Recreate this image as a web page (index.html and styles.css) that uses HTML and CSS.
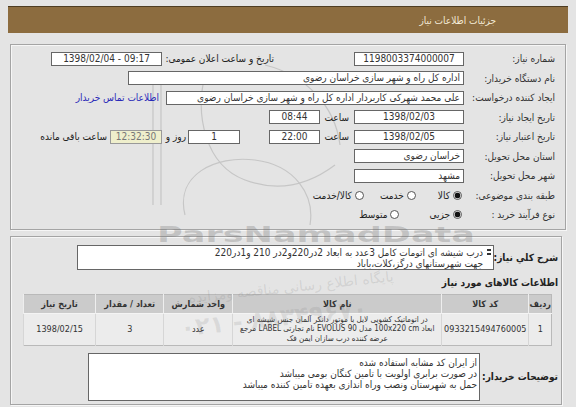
FILE: index.html
```html
<!DOCTYPE html>
<html dir="rtl" lang="fa">
<head>
<meta charset="utf-8">
<link rel="stylesheet" href="styles.css">
</head>
<body>
<div class="page">
  <div class="titlebar"><span class="title">جزئیات اطلاعات نیاز</span></div>

  <div class="panel p1">
    <div class="row">
      <div class="lbl">شماره نیاز:</div>
      <div class="box w110 num">1198003374000007</div>
      <div class="lbl-pub">تاریخ و ساعت اعلان عمومی:</div>
      <div class="box pub num">1398/02/04 - 09:17</div>
    </div>
    <div class="row">
      <div class="lbl">نام دستگاه خریدار:</div>
      <div class="box w336">اداره کل راه و شهر سازی خراسان رضوی</div>
    </div>
    <div class="row">
      <div class="lbl">ایجاد کننده درخواست:</div>
      <div class="box w298">علی محمد شهرکی کاربردار اداره کل راه و شهر سازی خراسان رضوی</div>
      <div class="link">اطلاعات تماس خریدار</div>
    </div>
    <div class="row">
      <div class="lbl">تاریخ ایجاد نیاز:</div>
      <div class="box w110 num">1398/02/03</div>
      <div class="hour">ساعت</div>
      <div class="box time num">08:44</div>
    </div>
    <div class="row">
      <div class="lbl">تاریخ اعتبار نیاز:</div>
      <div class="box w110 num">1398/02/05</div>
      <div class="hour">ساعت</div>
      <div class="box time num">22:00</div>
      <div class="box days num">1</div>
      <div class="dayslbl">روز و</div>
      <div class="box remain num">12:32:30</div>
      <div class="remainlbl">ساعت باقی مانده</div>
    </div>
    <div class="row">
      <div class="lbl">استان محل تحویل:</div>
      <div class="box w110">خراسان رضوی</div>
    </div>
    <div class="row">
      <div class="lbl">شهر محل تحویل:</div>
      <div class="box w110">مشهد</div>
    </div>
    <div class="row">
      <div class="lbl">طبقه بندی موضوعی:</div>
      <span class="radio on r1"></span><span class="opt">کالا</span>
      <span class="radio r2"></span><span class="opt">خدمت</span>
      <span class="radio r3"></span><span class="opt">کالا/خدمت</span>
    </div>
    <div class="row">
      <div class="lbl">نوع فرآیند خرید :</div>
      <span class="radio on r1"></span><span class="opt">جزیی</span>
      <span class="radio r4"></span><span class="opt">متوسط</span>
    </div>
  </div>

  <div class="panel p2">
    <div class="desc-row">
      <div class="blbl b-desc">شرح کلي نياز:</div>
      <div class="desc">
        <span class="spin"></span>
        <div>درب شیشه ای اتومات کامل 3عدد به ابعاد 2در220و2در 210 و1در220</div>
        <div>جهت شهرستانهای درگز،کلات،باباد</div>
      </div>
    </div>
    <div class="sect">اطلاعات کالاهای مورد نیاز</div>
    <table class="items">
      <thead>
        <tr>
          <th class="c-row">ردیف</th>
          <th class="c-code">کد کالا</th>
          <th class="c-name">نام کالا</th>
          <th class="c-unit">واحد شمارش</th>
          <th class="c-qty">تعداد / مقدار</th>
          <th class="c-date">تاریخ نیاز</th>
        </tr>
      </thead>
      <tbody>
        <tr>
          <td>1</td>
          <td>0933215494760005</td>
          <td class="name">در اتوماتیک کشویی لایل با موتور دانکر آلمان جنس شیشه ای<br>ابعاد 100x220 cm مدل EVOLUS 90 نام تجارتی LABEL مرجع<br>عرضه کننده درب سازان ایمن فک</td>
          <td>عدد</td>
          <td>3</td>
          <td>1398/02/15</td>
        </tr>
      </tbody>
    </table>
    <div class="notes-row">
      <div class="blbl b-notes">توضیحات خریدار:</div>
      <div class="notes">
        <div>از ایران کد مشابه استفاده شده</div>
        <div>در صورت برابری اولویت با تامین کنگان بومی میباشد</div>
        <div>حمل به شهرستان ونصب وراه اندازی بعهده تامین کننده میباشد</div>
      </div>
    </div>
  </div>

  <svg class="wm-logo" width="200" height="180" viewBox="0 0 200 180">
    <g fill="none" stroke="#c6c6c6" stroke-width="1.2">
      <path d="M8 20 V150 M16 20 V150"/>
      <path d="M40 160 C30 120 70 100 110 105 C150 110 170 140 165 170"/>
      <path d="M60 20 C50 60 60 110 100 125 C140 140 170 125 190 110"/>
      <path d="M120 10 C160 20 190 50 195 90"/>
    </g>
  </svg>
  <svg class="wm-text" width="430" height="150" viewBox="0 0 430 150">
    <text x="17" y="42" textLength="318" lengthAdjust="spacingAndGlyphs" class="wm-brand">ParsNamadData</text>
    <text x="151" y="92" class="wm-fa" transform="rotate(-6 151 88)">پایگاه اطلاع رسانی مناقصه ومزایده</text>
    <text x="40" y="130" class="wm-tel" transform="rotate(-6 100 120)">۰۲۱ - ۸۸۳۴۹۶۷۰</text>
  </svg>
</div>
</body>
</html>
```

FILE: styles.css
```css
* { box-sizing: border-box; }
html, body { margin: 0; padding: 0; }
body {
  background: #e4e4e4;
  font-family: "DejaVu Sans Condensed", "DejaVu Sans", sans-serif;
  font-size: 10px;
  color: #222;
  width: 576px;
  height: 407px;
  overflow: hidden;
}
.page {
  position: relative;
  padding: 6px 8px 0 8px;
}
.titlebar {
  height: 27px;
  background: #8c6c3f;
  border-top: 1px solid #4d3c22;
  display: flex;
  align-items: center;
  padding-right: 72px;
}
.title { color: #f3ead6; font-size: 10px; }

.panel {
  border: 1px solid #a4a4a4;
  box-shadow: inset 1px 1px 0 #f6f6f6, 1px 1px 0 #f6f6f6;
  position: relative;
  z-index: 1;
}
.p1 {
  margin: 11px 2px 0 2px;
  padding: 4px 10px 4px 0;
}
.row {
  display: flex;
  align-items: center;
  height: 19.5px;
  line-height: 11px;
  white-space: nowrap;
}
.lbl { width: 88px; flex: none; color: #333; }
.box {
  height: 14px;
  line-height: 12px;
  border: 1px solid #666;
  background: #fff;
  padding: 0 3px;
  flex: none;
  overflow: hidden;
  white-space: nowrap;
  color: #333;
}
.num { direction: ltr; text-align: center; }
.w110 { width: 110px; margin-right: 3px; }
.w336 { width: 336px; margin-right: 3px; }
.w298 { width: 298px; margin-right: 3px; }
.lbl-pub { width: 107px; margin-right: 80px; flex: none; }
.pub { width: 111px; margin-right: 5px; }
.link { margin-right: 7px; color: #2a2ab8; }
.hour { width: 24px; margin-right: 5px; flex: none; }
.time { width: 51px; margin-right: 5px; }
.days { width: 52px; margin-right: 29px; }
.dayslbl { width: 19px; margin-right: 2px; flex: none; }
.remain { width: 52px; margin-right: 5px; background: #efefcc; color: #777; border-color: #999; }
.remainlbl { margin-right: 3px; }

.radio {
  width: 9px;
  height: 9px;
  border-radius: 50%;
  border: 1px solid #555;
  background: #fff;
  flex: none;
}
.radio.on { background: radial-gradient(circle, #111 0 2.6px, #fff 3.2px); }
.r1 { margin-right: 5px; }
.opt { margin-right: 3px; }
.r2 { margin-right: 22px; }
.r3 { margin-right: 16px; }
.r4 { margin-right: 30px; }

.p2 {
  margin: 6px 6px 0 2px;
  padding: 8px 3px 8px 10px;
  height: 169px;
}
.desc-row { display: flex; align-items: center; }
.blbl { font-weight: bold; font-size: 10px; flex: none; white-space: nowrap; }
.b-desc { width: 64px; }
.b-notes { width: 68px; }
.desc {
  position: relative;
  width: 417px;
  height: 25px;
  border: 1px solid #666;
  background: #fff;
  padding: 1px 10px 0 3px;
  font-size: 10px;
  line-height: 11px;
  color: #333;
  white-space: nowrap;
  overflow: hidden;
}
.spin {
  position: absolute;
  right: 2px;
  top: 3px;
  width: 4px;
  height: 6px;
  border-top: 2px solid #333;
  border-bottom: 2px solid #333;
}
.sect { font-weight: bold; margin: 6px 0 4px 0; height: 14px; line-height: 14px; }
.items {
  border-collapse: collapse;
  width: 529px;
  margin-right: 6px;
  border: 1px solid #b9b9b9;
  font-size: 9px;
  color: #333;
}
.items th {
  background: #cbcbcb;
  height: 19px;
  font-weight: bold;
  border-left: 1px solid #eeeeee;
  padding: 0;
}
.items td {
  background: #ececec;
  text-align: center;
  border-left: 1px solid #d6d6d6;
  border-top: 1px solid #f4f4f4;
  padding: 1px 2px;
  height: 32px;
}
.items td.name { font-size: 8px; line-height: 9.5px; white-space: nowrap; overflow: hidden; }
.c-row { width: 20px; }
.c-code { width: 76px; }
.c-name { width: 210px; }
.c-unit { width: 74px; }
.c-qty { width: 74px; }
.c-date { width: 75px; }
.notes-row { display: flex; align-items: center; margin-top: 7px; }
.notes {
  margin-right: 10px;
  width: 392px;
  height: 48px;
  border: 1px solid #666;
  background: #fff;
  padding: 3px 2px 0 3px;
  font-size: 10px;
  line-height: 11px;
  color: #333;
  white-space: nowrap;
}

.wm-logo { position: absolute; left: 145px; top: 55px; z-index: 0; }
.wm-text {
  position: absolute;
  left: 140px;
  top: 200px;
  z-index: 2;
  pointer-events: none;
  direction: ltr;
}
.wm-brand {
  font-family: "DejaVu Sans", sans-serif;
  font-weight: bold;
  font-size: 22px;
  fill: #6e6e6e;
  fill-opacity: 0.28;
}
.wm-fa {
  font-family: "DejaVu Sans", sans-serif;
  font-size: 14px;
  fill: #787878;
  fill-opacity: 0.18;
  direction: rtl;
  text-anchor: middle;
}
.wm-tel {
  font-family: "DejaVu Sans", sans-serif;
  font-weight: bold;
  font-size: 24px;
  fill: #787878;
  fill-opacity: 0.16;
}
```
